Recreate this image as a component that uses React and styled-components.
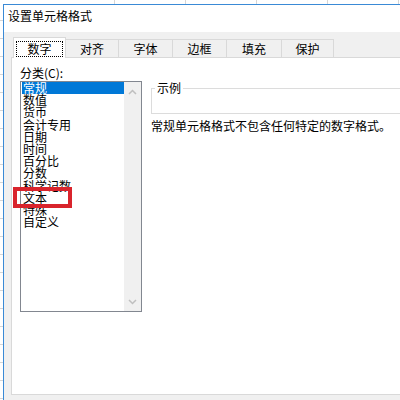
import React from 'react'
import styled, { createGlobalStyle } from 'styled-components'

const GlobalStyle = createGlobalStyle`
    html, body {
        margin: 0;
        padding: 0;
    }
    body {
        font-family: "Noto Sans CJK SC", "Noto Sans", sans-serif;
        font-size: 12px;
        color: #000;
    }
`

// spreadsheet peeking out behind the dialog
const Page = styled.div`
    position: relative;
    width: 400px;
    height: 400px;
    overflow: hidden;
    box-sizing: border-box;
    padding: 4px 0 0 3px;
    display: flex;
    background-color: #fff;
    background-image: repeating-linear-gradient(180deg, transparent 0 17px, #d6d6d6 17px 18px),
        repeating-linear-gradient(90deg, transparent 0 70px, #d6d6d6 70px 71px);
    background-position: 0 3px, 44px 0;
`

const Dialog = styled.div`
    width: 430px;
    flex-shrink: 0;
    display: flex;
    flex-direction: column;
    background: #f0f0f0;
    border-top: 1px solid #3a8ad6;
    border-left: 1px solid #3a8ad6;
`

const TitleBar = styled.div`
    height: 27px;
    line-height: 22px;
    padding-left: 4px;
    background: #fff;
`

const Body = styled.div`
    flex: 1;
    display: flex;
    flex-direction: column;
    padding: 5px 0 0 7px;
`

const TabStrip = styled.div`
    display: flex;
    align-items: flex-end;
    padding-left: 2px;
`

const Tab = styled.div`
    position: relative;
    box-sizing: border-box;
    width: ${p => p.$w}px;
    height: ${p => (p.$active ? 21 : 18)}px;
    margin-right: -1px;
    margin-bottom: ${p => (p.$active ? -1 : 0)}px;
    z-index: ${p => (p.$active ? 1 : 0)};
    padding: ${p => (p.$active ? '3px 2px 0' : '0')};
    border: 1px solid #d9d9d9;
    border-bottom: none;
    background: ${p => (p.$active ? '#fff' : '#f0f0f0')};
    text-align: center;
    line-height: 17px;
`

const FocusBox = styled.div`
    height: 16px;
    box-sizing: border-box;
    border: 1px dotted #000;
    line-height: 14px;
    text-align: center;
`

const Panel = styled.div`
    height: 338px;
    box-sizing: border-box;
    border: 1px solid #d9d9d9;
    background: #fff;
    padding: 8px 0 0 8px;
    display: flex;
    gap: 9px;
`

const LeftCol = styled.div`
    width: 122px;
    display: flex;
    flex-direction: column;
`

const Label = styled.div`
    line-height: 14px;
    height: 14px;
`

const ListBox = styled.div`
    margin-top: 1px;
    height: 231px;
    box-sizing: border-box;
    border: 1px solid #828790;
    display: flex;
`

const Items = styled.div`
    flex: 1;
    padding-left: 1px;
`

const Item = styled.div`
    height: 12.2px;
    line-height: 12.2px;
    padding-left: 1px;
    white-space: nowrap;
    background: ${p => (p.$selected ? '#0078d7' : 'transparent')};
    color: ${p => (p.$selected ? '#fff' : '#000')};
`

const ScrollBar = styled.div`
    width: 17px;
    background: #f0f0f0;
    display: flex;
    flex-direction: column;
    justify-content: space-between;
    align-items: center;
    padding: 7px 0 6px;
`

const RightCol = styled.div`
    flex: 1;
    display: flex;
    flex-direction: column;
    padding-top: 15px;
`

const GroupBox = styled.fieldset`
    margin: 0;
    padding: 0;
    border: 1px solid #dcdcdc;
    min-width: 0;
`

const Legend = styled.legend`
    margin-left: 3px;
    padding: 0 2px;
    line-height: 14px;
`

const Sample = styled.div`
    height: 18px;
`

const Description = styled.div`
    margin-top: 5px;
    line-height: 14px;
    white-space: nowrap;
`

// red annotation drawn over the screenshot
const Marker = styled.div`
    position: absolute;
    left: 13px;
    top: 187px;
    width: 59px;
    height: 21px;
    box-sizing: border-box;
    border: 4px solid #d9242c;
`

const Chevron = ({ up }) => (
    <svg width="9" height="6" viewBox="0 0 9 6">
        <path
            d={up ? 'M1 5 L4.5 1.5 L8 5' : 'M1 1 L4.5 4.5 L8 1'}
            fill="none"
            stroke="#bfbfbf"
            strokeWidth="1.5"
        />
    </svg>
)

const tabs = [
    ['数字', 53],
    ['对齐', 54],
    ['字体', 55],
    ['边框', 55],
    ['填充', 56],
    ['保护', 53],
]

const categories = ['常规', '数值', '货币', '会计专用', '日期', '时间', '百分比', '分数', '科学记数', '文本', '特殊', '自定义']

export default function App() {
    return (
        <Page>
            <GlobalStyle />
            <Dialog>
                <TitleBar>设置单元格格式</TitleBar>
                <Body>
                    <TabStrip>
                        {tabs.map(([name, w], i) => (
                            <Tab key={name} $w={w} $active={i === 0}>
                                {i === 0 ? <FocusBox>{name}</FocusBox> : name}
                            </Tab>
                        ))}
                    </TabStrip>
                    <Panel>
                        <LeftCol>
                            <Label>分类(C):</Label>
                            <ListBox>
                                <Items>
                                    {categories.map((c, i) => (
                                        <Item key={c} $selected={i === 0}>
                                            {c}
                                        </Item>
                                    ))}
                                </Items>
                                <ScrollBar>
                                    <Chevron up />
                                    <Chevron />
                                </ScrollBar>
                            </ListBox>
                        </LeftCol>
                        <RightCol>
                            <GroupBox>
                                <Legend>示例</Legend>
                                <Sample />
                            </GroupBox>
                            <Description>常规单元格格式不包含任何特定的数字格式。</Description>
                        </RightCol>
                    </Panel>
                </Body>
            </Dialog>
            <Marker />
        </Page>
    )
}
